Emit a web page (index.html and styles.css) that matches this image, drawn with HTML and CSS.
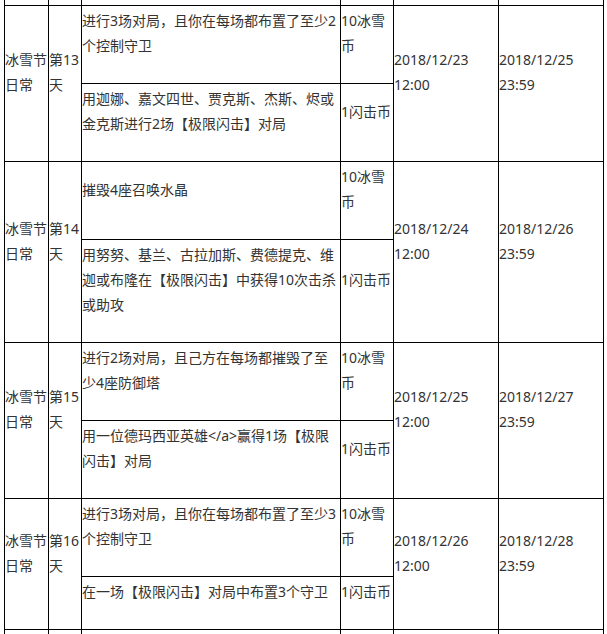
FILE: index.html
```html
<!DOCTYPE html>
<html lang="zh-CN">
<head>
<meta charset="utf-8">
<title>冰雪节日常任务</title>
<link rel="stylesheet" href="styles.css">
</head>
<body>
<table class="sched">
  <colgroup>
    <col class="c-type"><col class="c-day"><col class="c-task"><col class="c-reward"><col class="c-start"><col class="c-end">
  </colgroup>
  <tbody>
    <tr class="stub"><td></td><td></td><td></td><td></td><td></td><td></td></tr>

    <tr>
      <td rowspan="2"><p>冰雪节日常</p></td>
      <td rowspan="2"><p>第13天</p></td>
      <td><p>进行3场对局，且你在每场都布置了至少2个控制守卫</p></td>
      <td><p>10冰雪币</p></td>
      <td rowspan="2"><p>2018/12/23 12:00</p></td>
      <td rowspan="2"><p>2018/12/25 23:59</p></td>
    </tr>
    <tr>
      <td><p>用迦娜、嘉文四世、贾克斯、杰斯、烬或金克斯进行2场【极限闪击】对局</p></td>
      <td><p>1闪击币</p></td>
    </tr>

    <tr>
      <td rowspan="2"><p>冰雪节日常</p></td>
      <td rowspan="2"><p>第14天</p></td>
      <td><p>摧毁4座召唤水晶</p></td>
      <td><p>10冰雪币</p></td>
      <td rowspan="2"><p>2018/12/24 12:00</p></td>
      <td rowspan="2"><p>2018/12/26 23:59</p></td>
    </tr>
    <tr>
      <td><p>用努努、基兰、古拉加斯、费德提克、维迦或布隆在【极限闪击】中获得10次击杀或助攻</p></td>
      <td><p>1闪击币</p></td>
    </tr>

    <tr>
      <td rowspan="2"><p>冰雪节日常</p></td>
      <td rowspan="2"><p>第15天</p></td>
      <td><p>进行2场对局，且己方在每场都摧毁了至少4座防御塔</p></td>
      <td><p>10冰雪币</p></td>
      <td rowspan="2"><p>2018/12/25 12:00</p></td>
      <td rowspan="2"><p>2018/12/27 23:59</p></td>
    </tr>
    <tr>
      <td><p>用一位德玛西亚英雄&lt;/a&gt;赢得1场【极限闪击】对局</p></td>
      <td><p>1闪击币</p></td>
    </tr>

    <tr>
      <td rowspan="2"><p>冰雪节日常</p></td>
      <td rowspan="2"><p>第16天</p></td>
      <td><p>进行3场对局，且你在每场都布置了至少3个控制守卫</p></td>
      <td><p>10冰雪币</p></td>
      <td rowspan="2"><p>2018/12/26 12:00</p></td>
      <td rowspan="2"><p>2018/12/28 23:59</p></td>
    </tr>
    <tr>
      <td><p>在一场【极限闪击】对局中布置3个守卫</p></td>
      <td><p>1闪击币</p></td>
    </tr>

    <tr class="stub"><td></td><td></td><td></td><td></td><td></td><td></td></tr>
  </tbody>
</table>
</body>
</html>
```

FILE: styles.css
```css
html, body {
  margin: 0;
  padding: 0;
  background: #fff;
  overflow: hidden;
}

body {
  font-family: "Noto Sans", "Noto Sans CJK SC", sans-serif;
  font-size: 14px;
  line-height: 25px;
  color: #333;
}

.sched {
  margin-left: 4px;
  width: 600px;
  table-layout: fixed;
  border-collapse: separate;
  border-spacing: 0;
  border-left: 1px solid #000;
}

.c-type { width: 44px; }
.c-day { width: 33px; }
.c-task { width: 259px; }
.c-reward { width: 53px; }
.c-start { width: 105px; }
.c-end { width: 105px; }

.sched td {
  border-right: 1px solid #000;
  border-bottom: 1px solid #000;
  padding: 2px 0;
  vertical-align: middle;
  text-align: left;
}

.sched p {
  margin: 0 0 23px;
}

.sched .stub td {
  height: 5px;
  padding: 0;
  line-height: 0;
  font-size: 0;
}
```
